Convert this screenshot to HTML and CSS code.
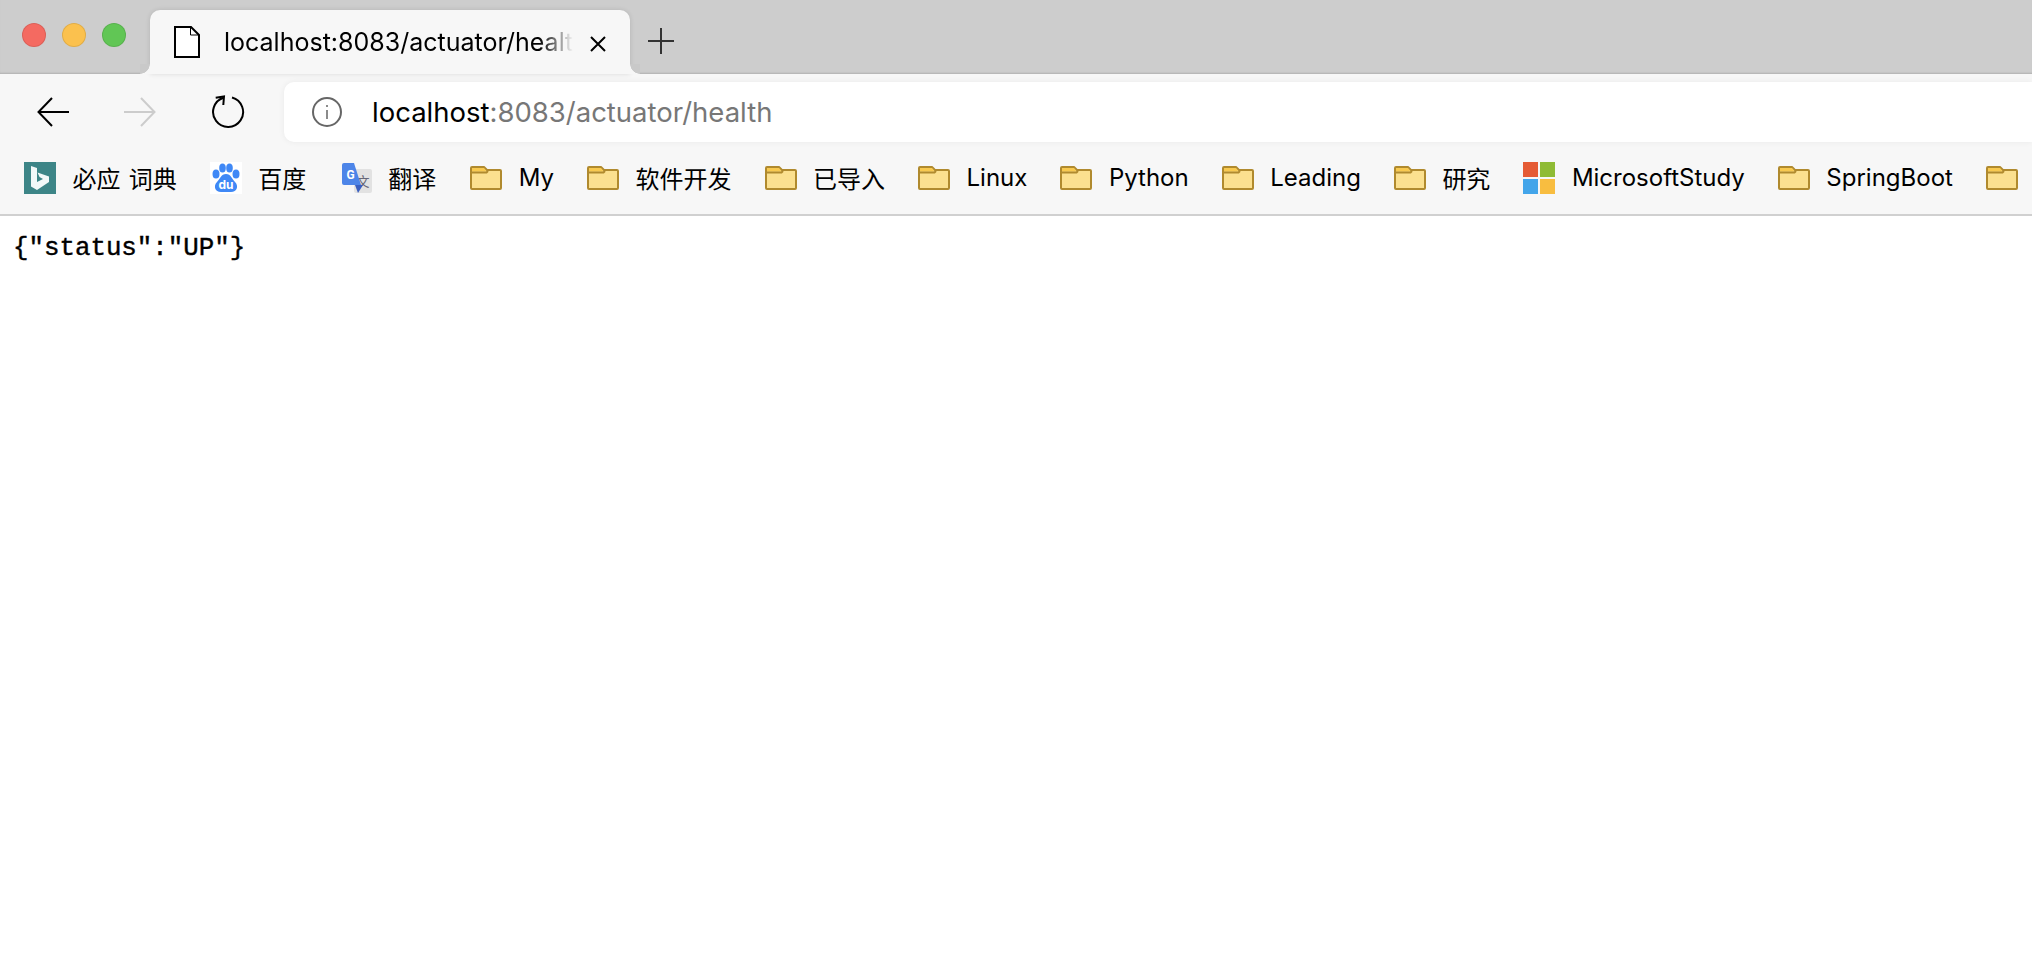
FILE: index.html
```html
<!DOCTYPE html>
<html lang="en">
<head>
<meta charset="utf-8">
<title>localhost:8083/actuator/health</title>
<link rel="stylesheet" href="styles.css">
</head>
<body>
<svg class="defs" width="0" height="0" aria-hidden="true">
  <symbol id="folder" viewBox="0 0 32 24">
    <path d="M1 4 V2 q0-1 1-1 H14 L17 4 H30 q1 0 1 1 V22 q0 1-1 1 H2 q-1 0-1-1 Z" fill="#fbe08f" stroke="#b08a2e" stroke-width="2" stroke-linejoin="round"/>
    <path d="M2 2 H14 L16.500 5.500 H2 Z" fill="#f8c94f"/>
    <path d="M1 6.500 H16.500 L18 5" fill="none" stroke="#b08a2e" stroke-width="2"/>
  </symbol>
</svg>
<header class="chrome">
  <div class="tabbar">
    <div class="lights">
      <span class="light light-red"></span>
      <span class="light light-yellow"></span>
      <span class="light light-green"></span>
    </div>
    <div class="tab">
      <svg class="doc-icon" width="26" height="32" viewBox="0 0 26 32"><path d="M1 1 H17 L25 9 V31 H1 Z" fill="#fff" stroke="#000" stroke-width="2"/><path d="M16.500 1 V9 H25" fill="none" stroke="#000" stroke-width="1"/></svg>
      <span class="tab-title">localhost:8083/actuator/health</span>
      <svg class="tab-close" width="16" height="16" viewBox="0 0 16 16"><path d="M1 1 L15 15 M15 1 L1 15" stroke="#000" stroke-width="2"/></svg>
    </div>
    <svg class="new-tab" width="26" height="26" viewBox="0 0 26 26"><path d="M0 13 H26 M13 0 V26" stroke="#333" stroke-width="2"/></svg>
  </div>
  <div class="toolbar">
    <svg class="nav-icon" width="32" height="30" viewBox="0 0 32 30"><path d="M32 15 H1.500 M15 1 L1.500 15 L15 29" fill="none" stroke="#000" stroke-width="2"/></svg>
    <svg class="nav-icon" width="32" height="30" viewBox="0 0 32 30"><path d="M0 15 H30.500 M17 1 L30.500 15 L17 29" fill="none" stroke="#ccc" stroke-width="2"/></svg>
    <svg class="nav-icon" width="34" height="34" viewBox="0 0 34 34"><path d="M12.500 2.700 A15 15 0 1 0 21 2.500" fill="none" stroke="#000" stroke-width="2"/><path d="M4.700 2.700 L13 1.500 L12.300 10" fill="none" stroke="#000" stroke-width="2"/></svg>
    <div class="address">
      <svg class="info-icon" width="30" height="30" viewBox="0 0 30 30"><circle cx="15" cy="15" r="14" fill="none" stroke="#666" stroke-width="2"/><path d="M15 13 V22 M15 8 V10" stroke="#666" stroke-width="1.500"/></svg>
      <span class="url"><span class="url-host">localhost</span>:8083/actuator/health</span>
    </div>
  </div>
  <nav class="bookmarks">
    <a class="bm bm-bing">
      <svg class="bm-icon" width="32" height="32" viewBox="0 0 32 32"><rect width="32" height="32" fill="#3d8587"/><path d="M7 4 L13 6 V20 L19 17 L15.500 15 L13.500 10.500 L25 14.500 V20 L13 28 L7 24.500 Z" fill="#f2f8f8"/></svg>
      <span>必应 词典</span>
    </a>
    <a class="bm bm-baidu">
      <svg class="bm-icon" width="32" height="32" viewBox="0 0 32 32"><rect width="32" height="32" fill="#fff"/><g fill="#3f88f6"><ellipse cx="6" cy="12" rx="3.500" ry="4.500"/><ellipse cx="12.500" cy="6" rx="3.300" ry="4.500"/><ellipse cx="19.500" cy="6" rx="3.300" ry="4.500"/><ellipse cx="26" cy="12" rx="3.500" ry="4.500"/><path d="M16 12 C11 12 10 17 7 20 C3 24 5 30 11 30 H21 C27 30 29 24 25 20 C22 17 21 12 16 12 Z"/></g><text class="baidu-du" x="16" y="27" text-anchor="middle">du</text></svg>
      <span>百度</span>
    </a>
    <a class="bm bm-translate">
      <svg class="bm-icon" width="30" height="30" viewBox="0 0 30 30"><rect x="12" y="6" width="18" height="24" rx="2" fill="#e2e2e2"/><text class="gt-wen" x="21" y="23" text-anchor="middle">文</text><path d="M2 0 H12 L19 22 H2 Q0 22 0 20 V2 Q0 0 2 0 Z" fill="#4d85e8"/><path d="M13 22 H21 L16 30 Z" fill="#3a5fc0"/><text class="gt-g" x="8.500" y="16" text-anchor="middle">G</text></svg>
      <span>翻译</span>
    </a>
    <a class="bm"><svg class="folder-icon" width="32" height="24"><use href="#folder"/></svg><span>My</span></a>
    <a class="bm"><svg class="folder-icon" width="32" height="24"><use href="#folder"/></svg><span>软件开发</span></a>
    <a class="bm"><svg class="folder-icon" width="32" height="24"><use href="#folder"/></svg><span>已导入</span></a>
    <a class="bm"><svg class="folder-icon" width="32" height="24"><use href="#folder"/></svg><span>Linux</span></a>
    <a class="bm"><svg class="folder-icon" width="32" height="24"><use href="#folder"/></svg><span>Python</span></a>
    <a class="bm"><svg class="folder-icon" width="32" height="24"><use href="#folder"/></svg><span>Leading</span></a>
    <a class="bm"><svg class="folder-icon" width="32" height="24"><use href="#folder"/></svg><span>研究</span></a>
    <a class="bm">
      <svg class="bm-icon" width="32" height="32" viewBox="0 0 32 32"><rect width="15" height="15" fill="#e55b35"/><rect x="17" width="15" height="15" fill="#8fbb35"/><rect y="17" width="15" height="15" fill="#43a5ea"/><rect x="17" y="17" width="15" height="15" fill="#f8bd40"/></svg>
      <span>MicrosoftStudy</span>
    </a>
    <a class="bm"><svg class="folder-icon" width="32" height="24"><use href="#folder"/></svg><span>SpringBoot</span></a>
    <a class="bm"><svg class="folder-icon" width="32" height="24"><use href="#folder"/></svg></a>
  </nav>
</header>
<main class="page">
  <pre class="json">{"status":"UP"}</pre>
</main>
</body>
</html>
```
FILE: styles.css
```css
* { box-sizing: border-box; }
html, body { margin: 0; height: 100%; background: #fff; overflow: hidden; }
body { font-family: Inter, "Noto Sans CJK SC", sans-serif; color: #000; }
.defs { position: absolute; }

.tabbar {
  display: flex;
  align-items: flex-start;
  height: 74px;
  padding: 10px 0 0 22px;
  background: #cdcdcd;
  box-shadow: inset 0 -2px 2px -1px rgba(0, 0, 0, .14);
}
.lights { display: flex; gap: 16px; margin-top: 13px; }
.light { width: 24px; height: 24px; border-radius: 50%; border: 1px solid rgba(0, 0, 0, .1); }
.light-red { background: #f46a61; }
.light-yellow { background: #fbc14e; }
.light-green { background: #61c655; }

.tab {
  position: relative;
  display: flex;
  align-items: center;
  width: 480px;
  height: 64px;
  margin-left: 24px;
  padding: 0 0 0 24px;
  background: #f7f7f7;
  border-radius: 10px 10px 0 0;
  box-shadow: 0 0 5px rgba(0, 0, 0, .12);
}
.tab::before, .tab::after {
  content: "";
  position: absolute;
  bottom: 0;
  width: 10px;
  height: 10px;
}
.tab::before { left: -10px; background: radial-gradient(circle at 0 0, #c9c9c9 9.500px, #f7f7f7 10px); }
.tab::after { right: -10px; background: radial-gradient(circle at 100% 0, #c9c9c9 9.500px, #f7f7f7 10px); }
.doc-icon { flex: none; margin-top: -1px; }
.tab-title {
  flex: none;
  width: 349px;
  margin-left: 24px;
  margin-top: -1px;
  overflow: hidden;
  white-space: nowrap;
  font-size: 25px;
  -webkit-mask-image: linear-gradient(90deg, #000 calc(100% - 34px), transparent);
  mask-image: linear-gradient(90deg, #000 calc(100% - 34px), transparent);
}
.tab-close { flex: none; margin-left: 17px; margin-top: 4px; }
.new-tab { flex: none; margin: 18px 0 0 18px; }

.toolbar {
  display: flex;
  align-items: center;
  gap: 55px;
  height: 70px;
  padding: 8px 0 2px 37px;
  background: #f7f7f7;
}
.address {
  display: flex;
  align-items: center;
  flex: 1;
  height: 60px;
  margin-left: -16px;
  padding-left: 28px;
  background: #fff;
  border-radius: 10px 0 0 10px;
  box-shadow: 0 0 6px rgba(0, 0, 0, .06);
}
.info-icon { flex: none; margin-top: -1px; }
.url { margin-left: 30px; font-size: 27.500px; color: #777; white-space: nowrap; }
.url-host { color: #000; }

.bookmarks {
  display: flex;
  align-items: center;
  gap: 33px;
  height: 72px;
  padding: 0 0 2px 24px;
  background: #f7f7f7;
  border-bottom: 2px solid #d0d0d0;
  overflow: hidden;
  font-size: 24px;
  white-space: nowrap;
}
.bm { display: flex; align-items: center; gap: 16.500px; flex: none; }
.bm span { margin-top: -2px; }
.bm-bing span { word-spacing: 1.500px; }
.bm-baidu { margin-right: 2.500px; }
.bm-translate { margin-right: 1px; }
.bm-icon, .folder-icon { flex: none; display: block; }
.baidu-du { font: 700 12px Inter, sans-serif; fill: #fff; }
.gt-wen { font: 400 13px "Noto Sans CJK SC", sans-serif; fill: #667; }
.gt-g { font: 700 12px Roboto, sans-serif; fill: #fff; }

.page { padding: 18px 0 0 13px; }
.json {
  margin: 0;
  font: 400 25.800px/30px "Liberation Mono", monospace;
  -webkit-text-stroke: .4px #000;
}
```
